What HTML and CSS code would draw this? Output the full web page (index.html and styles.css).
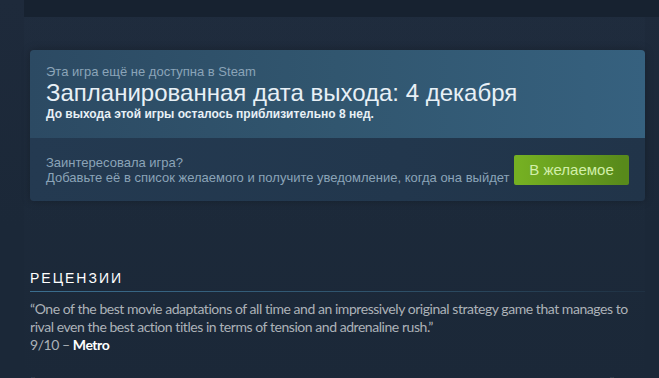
FILE: index.html
```html
<!DOCTYPE html>
<html lang="ru">
<head>
<meta charset="utf-8">
<link rel="stylesheet" href="styles.css">
</head>
<body>
<div class="page">
  <div class="topbar"></div>
  <div class="column">
    <div class="comingsoon">
      <div class="cs-head">
        <div class="cs-note">Эта игра ещё не доступна в Steam</div>
        <h1 class="cs-title">Запланированная дата выхода: 4 декабря</h1>
        <div class="cs-eta">До выхода этой игры осталось приблизительно 8 нед.</div>
      </div>
      <div class="cs-foot">
        <div class="cs-text">
          <div>Заинтересовала игра?</div>
          <div>Добавьте её в список желаемого и получите уведомление, когда она выйдет</div>
        </div>
        <a class="wish-btn" href="#">В желаемое</a>
      </div>
    </div>

    <section class="reviews">
      <h2 class="reviews-title">Рецензии</h2>
      <p class="review">“One of the best movie adaptations of all time and an impressively original strategy game that manages to rival even the best action titles in terms of tension and adrenaline rush.”<br>9/10 – <b>Metro</b></p>
      <p class="review">“It's a polished and well-built game that manages to bring something new to the genre, much like Wick”</p>
    </section>
  </div>
</div>
</body>
</html>
```

FILE: styles.css
```css
html, body {
  margin: 0;
  padding: 0;
}
body {
  background: #1b2838;
  background-image: linear-gradient(180deg, #1e2a3b 0%, #1b2838 60%);
  width: 659px;
  height: 378px;
  overflow: hidden;
  font-family: Arial, "Liberation Sans", sans-serif;
}
.page {
  padding-left: 24px;
}
.topbar {
  height: 17px;
  background: #172230;
}
.column {
  width: 621px;
  padding: 33px 0 0 6px;
  box-sizing: border-box;
  background: linear-gradient(180deg, rgba(34, 48, 66, 0.35) 0%, rgba(27, 40, 56, 0) 100%);
}
.comingsoon {
  width: 615px;
  border-radius: 4px;
  overflow: hidden;
  box-shadow: 0 0 8px rgba(0, 0, 0, 0.25);
}
.cs-head {
  height: 88px;
  box-sizing: border-box;
  padding: 14px 16px 0 16px;
  background: linear-gradient(90deg, #2c4a63 0%, #31566f 50%, #36617f 100%);
}
.cs-note {
  font-size: 13px;
  line-height: 16px;
  color: #8ba4b8;
}
.cs-title {
  margin: 0;
  font-size: 24px;
  font-weight: normal;
  line-height: 26px;
  color: #e8f0f6;
}
.cs-eta {
  font-size: 12px;
  font-weight: bold;
  line-height: 16px;
  color: #e8f0f6;
}
.cs-foot {
  height: 63px;
  box-sizing: border-box;
  padding: 0 16px;
  display: flex;
  align-items: center;
  justify-content: space-between;
  background: linear-gradient(90deg, #243a51 0%, #22374d 60%, #213449 100%);
}
.cs-text {
  font-size: 13px;
  line-height: 15px;
  color: #8ba4b8;
  white-space: nowrap;
}
.wish-btn {
  display: block;
  width: 115px;
  height: 30px;
  line-height: 30px;
  text-align: center;
  border-radius: 2px;
  font-size: 15px;
  color: #d2efa9;
  text-decoration: none;
  background: linear-gradient(90deg, #75b022 5%, #588a1b 95%);
}
.reviews {
  margin-top: 68px;
}
.reviews-title {
  margin: 0;
  padding-bottom: 4px;
  font-family: Arial, "Liberation Sans", sans-serif;
  font-size: 14px;
  font-weight: normal;
  letter-spacing: 2px;
  text-transform: uppercase;
  color: #ffffff;
  line-height: 18px;
}
.reviews-title::after {
  content: "";
  display: block;
  height: 1px;
  margin-top: 4px;
  background: linear-gradient(90deg, #3b6e8f 0%, #2e5068 60%, rgba(46, 80, 104, 0.2) 100%);
}
.review {
  margin: 4px 0 20px 0;
  font-family: Lato, "Noto Sans", sans-serif;
  font-size: 14px;
  letter-spacing: -0.45px;
  line-height: 18px;
  color: #acb2b8;
  width: 615px;
}
.review b {
  font-weight: bold;
  color: #ffffff;
}
```
